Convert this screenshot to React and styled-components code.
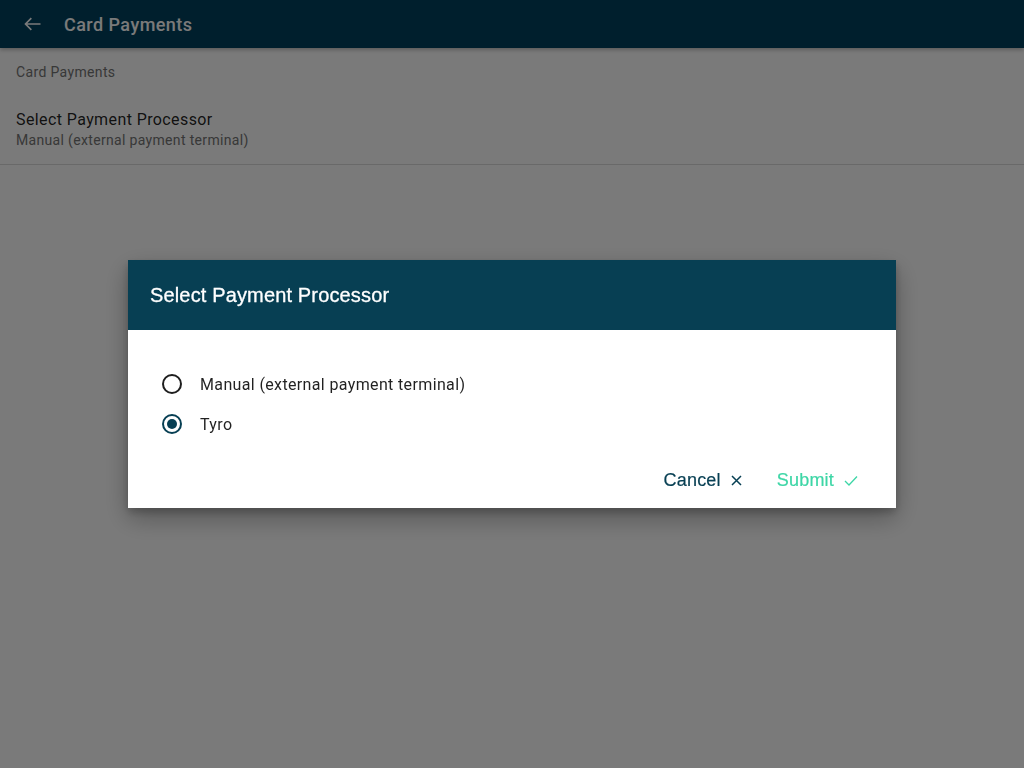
import styled, { createGlobalStyle } from "styled-components";

const GlobalStyle = createGlobalStyle`
  html, body {
    margin: 0;
    padding: 0;
    height: 100%;
    background: #ffffff;
  }
  body {
    font-family: Roboto, "Noto Sans", sans-serif;
  }
  #root {
    height: 100%;
  }
`;

const Page = styled.div`
  display: flex;
  flex-direction: column;
  min-height: 768px;
  background: #ffffff;
`;

const TopBar = styled.header`
  display: flex;
  align-items: center;
  height: 48px;
  padding: 0 22px;
  gap: 20px;
  background: #00415e;
  box-shadow: 0 2px 4px rgba(0, 0, 0, 0.25);
  color: #ffffff;
`;

const BackButton = styled.button`
  display: flex;
  align-items: center;
  justify-content: center;
  width: 22px;
  height: 22px;
  padding: 0;
  border: none;
  background: none;
  color: #ffffff;
  cursor: pointer;
`;

const TopTitle = styled.h1`
  margin: 0;
  font-family: Roboto, sans-serif;
  font-size: 18px;
  font-weight: 500;
  letter-spacing: 0.45px;
`;

const List = styled.div`
  display: flex;
  flex-direction: column;
`;

const SubHeader = styled.div`
  padding: 16px 16px 0;
  height: 34px;
  font-size: 14px;
  letter-spacing: 0.35px;
  color: #757575;
`;

const ListItem = styled.div`
  display: flex;
  flex-direction: column;
  padding: 12px 16px 14px;
  border-bottom: 1px solid #dcdcdc;
`;

const Primary = styled.span`
  font-size: 16px;
  line-height: 20px;
  letter-spacing: 0.4px;
  color: rgba(0, 0, 0, 0.87);
`;

const Secondary = styled.span`
  font-size: 14px;
  line-height: 20px;
  letter-spacing: 0.33px;
  color: #757575;
`;

const Overlay = styled.div`
  position: fixed;
  inset: 0;
  display: flex;
  align-items: center;
  justify-content: center;
  background: rgba(0, 0, 0, 0.52);
`;

const Dialog = styled.div`
  display: flex;
  flex-direction: column;
  width: 768px;
  background: #ffffff;
  box-shadow: 0 10px 24px rgba(0, 0, 0, 0.3), 0 4px 8px rgba(0, 0, 0, 0.2);
`;

const DialogHeader = styled.div`
  display: flex;
  align-items: center;
  height: 70px;
  padding: 0 22px;
  background: #073f53;
`;

const DialogTitle = styled.h2`
  margin: 0;
  font-family: "Liberation Sans", Arial, sans-serif;
  font-size: 20px;
  font-weight: 400;
  letter-spacing: 0.15px;
  color: #ffffff;
  -webkit-text-stroke: 0.3px #ffffff;
`;

const Options = styled.div`
  display: flex;
  flex-direction: column;
  padding: 34px 34px 18px;
`;

const Option = styled.label`
  display: flex;
  align-items: center;
  gap: 18px;
  height: 40px;
  cursor: pointer;
`;

const Radio = styled.span`
  display: flex;
  align-items: center;
  justify-content: center;
  box-sizing: border-box;
  width: 20px;
  height: 20px;
  border-radius: 50%;
  border: 2px solid ${(p) => (p.checked ? "#073f53" : "#1e1e1e")};

  &::after {
    content: "";
    display: ${(p) => (p.checked ? "block" : "none")};
    width: 10px;
    height: 10px;
    border-radius: 50%;
    background: #073f53;
  }
`;

const OptionText = styled.span`
  font-size: 16px;
  letter-spacing: 0.36px;
  color: rgba(0, 0, 0, 0.87);
`;

const Actions = styled.div`
  display: flex;
  justify-content: flex-end;
  align-items: center;
  gap: 35px;
  padding: 0 38px 10px;
  height: 36px;
`;

const ActionButton = styled.button`
  display: flex;
  align-items: center;
  gap: 10px;
  padding: 0;
  border: none;
  background: none;
  font-family: "Liberation Sans", Arial, sans-serif;
  font-size: 18px;
  letter-spacing: 0.2px;
  color: ${(p) => p.color};
  -webkit-text-stroke: 0.2px ${(p) => p.color};
  cursor: pointer;
`;

const options = [
  { id: "manual", label: "Manual (external payment terminal)" },
  { id: "tyro", label: "Tyro" },
];

const App = () => {
  const selected = "tyro";
  return (
    <>
      <GlobalStyle />
      <Page>
        <TopBar>
          <BackButton aria-label="Back">
            <svg width="20" height="20" viewBox="0 0 24 24" fill="none" stroke="currentColor" strokeWidth="2">
              <path d="M21 12H4M10 5l-7 7 7 7" />
            </svg>
          </BackButton>
          <TopTitle>Card Payments</TopTitle>
        </TopBar>
        <List>
          <SubHeader>Card Payments</SubHeader>
          <ListItem>
            <Primary>Select Payment Processor</Primary>
            <Secondary>Manual (external payment terminal)</Secondary>
          </ListItem>
        </List>
      </Page>
      <Overlay>
        <Dialog>
          <DialogHeader>
            <DialogTitle>Select Payment Processor</DialogTitle>
          </DialogHeader>
          <Options>
            {options.map((o) => (
              <Option key={o.id}>
                <Radio checked={o.id === selected} />
                <OptionText>{o.label}</OptionText>
              </Option>
            ))}
          </Options>
          <Actions>
            <ActionButton color="#073f53">
              Cancel
              <svg width="11" height="11" viewBox="0 0 11 11" stroke="currentColor" strokeWidth="1.5">
                <path d="M1 1l9 9M10 1L1 10" />
              </svg>
            </ActionButton>
            <ActionButton color="#3dd6a6">
              Submit
              <svg width="14" height="11" viewBox="0 0 14 11" fill="none" stroke="currentColor" strokeWidth="1.3">
                <path d="M1 6l4 4 8-8.5" />
              </svg>
            </ActionButton>
          </Actions>
        </Dialog>
      </Overlay>
    </>
  );
};

export default App;
